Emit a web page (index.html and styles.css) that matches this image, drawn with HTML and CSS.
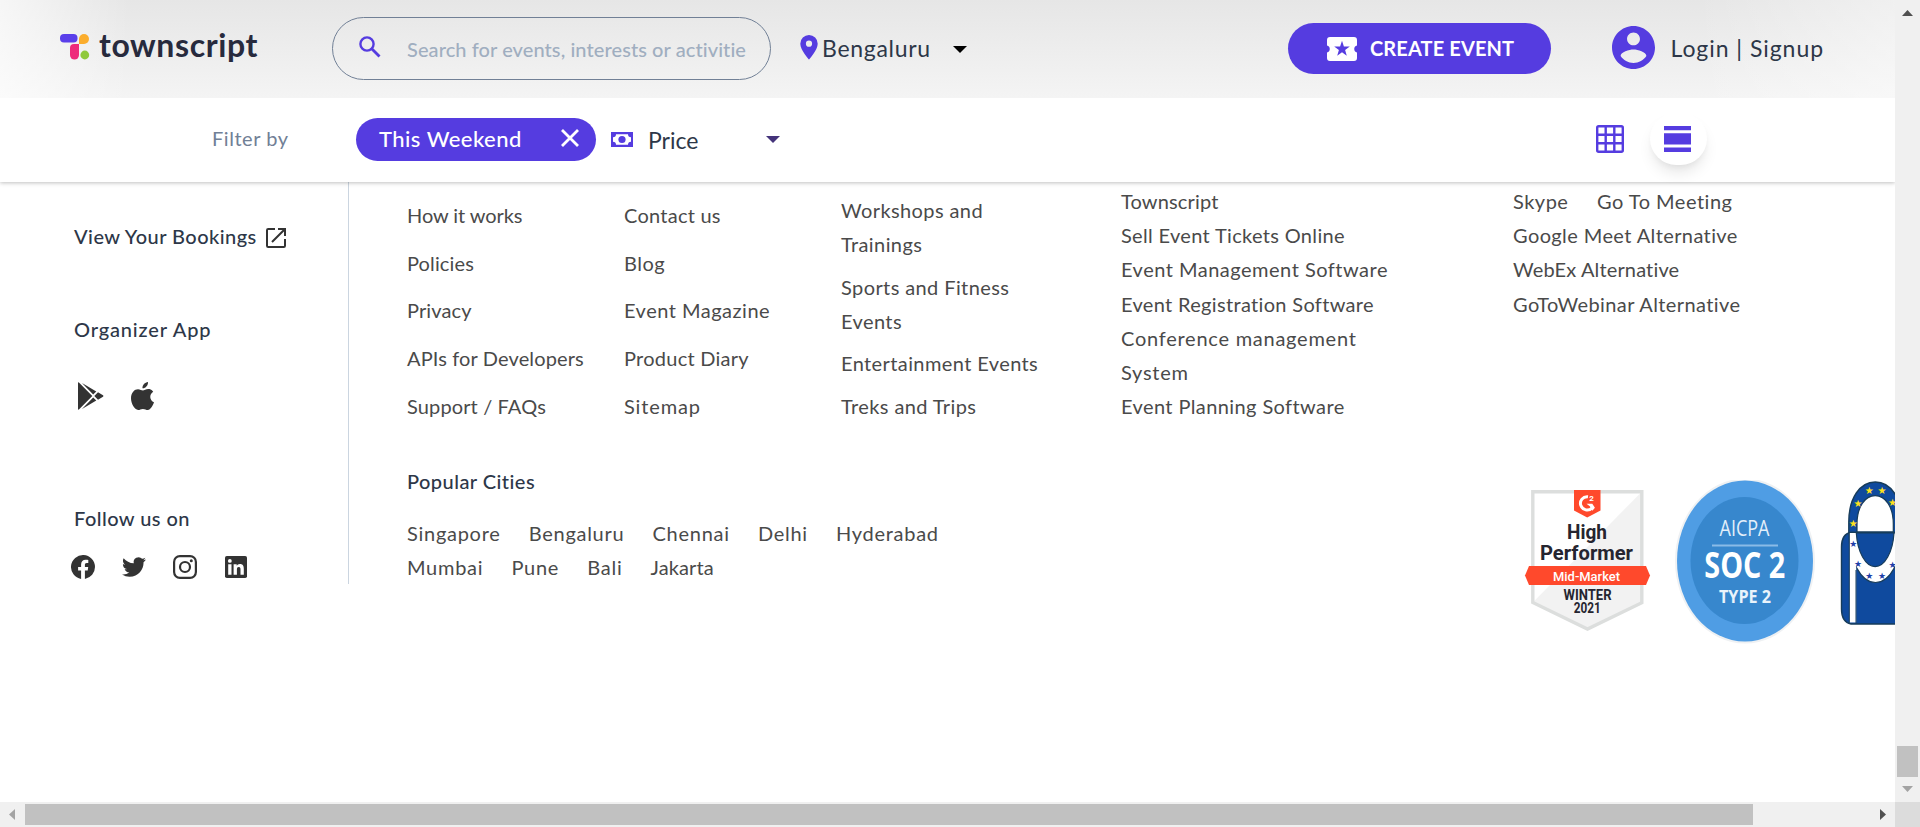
FILE: index.html
```html
<!DOCTYPE html>
<html lang="en">
<head>
<meta charset="utf-8">
<title>Townscript</title>
<link rel="stylesheet" href="styles.css">
</head>
<body>
<div class="window">
<div class="page">
  <header class="header">
    <a class="logo">
      <svg width="30" height="26" viewBox="0 0 30 26"><rect x="0" y="0" width="17.500" height="8.500" rx="4" fill="#5a3fea"/><path d="M19 10V5a5 5 0 0 1 10 0a5 5 0 0 1-5 5z" fill="#fbad2d"/><path d="M10 14a4 4 0 0 1 4-4h5v11a4.500 4.500 0 0 1-9 0z" fill="#ee2a7b"/><circle cx="24.800" cy="21" r="4.400" fill="#8fc93a"/></svg>
      <span class="logo-text">townscript</span>
    </a>
    <div class="search">
      <svg class="search-icon" width="22" height="22" viewBox="0 0 22 22" fill="none" stroke="#553ce0" stroke-width="2.400"><circle cx="8" cy="8" r="6.600"/><path d="M13 13l7.500 7.500" stroke-width="2.900"/></svg>
      <div class="placeholder">Search for events, interests or activities</div>
    </div>
    <div class="city">
      <svg width="18" height="25" viewBox="0 0 18 25"><path d="M9 0a8.700 8.700 0 0 0-8.700 8.700C.300 15.200 9 24.500 9 24.500s8.700-9.300 8.700-15.800A8.700 8.700 0 0 0 9 0zm0 11.800a3.100 3.100 0 1 1 0-6.200 3.100 3.100 0 0 1 0 6.200z" fill="#553ce0"/></svg>
      <span class="city-name">Bengaluru</span>
      <svg width="14" height="7" viewBox="0 0 14 7"><path d="M0 0h14L7 7z" fill="#000"/></svg>
    </div>
    <a class="create">
      <svg width="30" height="24" viewBox="0 0 30 24"><path d="M3 0h24a3 3 0 0 1 3 3v5.500a3.600 3.600 0 0 0 0 7V21a3 3 0 0 1-3 3H3a3 3 0 0 1-3-3v-5.500a3.600 3.600 0 0 0 0-7V3a3 3 0 0 1 3-3z" fill="#fff"/><path d="M15 3.800l1.900 5.600h5.900l-4.700 3.600 1.700 5.800-4.800-3.500-4.800 3.500 1.700-5.800-4.700-3.600h5.900z" fill="#553ce0"/></svg>
      <span>CREATE EVENT</span>
    </a>
    <a class="login">
      <svg width="43" height="43" viewBox="2 2 20 20"><path fill="#553ce0" d="M12 2C6.480 2 2 6.480 2 12s4.480 10 10 10 10-4.480 10-10S17.520 2 12 2zm0 3c1.660 0 3 1.340 3 3s-1.340 3-3 3-3-1.340-3-3 1.340-3 3-3zm0 14.200c-2.500 0-4.710-1.280-6-3.220.030-1.990 4-3.080 6-3.080 1.990 0 5.970 1.090 6 3.080-1.290 1.940-3.500 3.220-6 3.220z"/></svg>
      <span>Login | Signup</span>
    </a>
  </header>

  <div class="filters">
    <span class="filter-by">Filter by</span>
    <div class="pill"><span>This Weekend</span>
      <svg width="18" height="18" viewBox="0 0 18 18" stroke="#fff" stroke-width="2.800"><path d="M1 1l16 16M17 1L1 17"/></svg>
    </div>
    <div class="price">
      <svg width="22" height="15" viewBox="0 0 22 15"><rect width="22" height="15" fill="#553ce0"/><path d="M5 2.300h12a3 3 0 0 0 3 3v4.400a3 3 0 0 0-3 3H5a3 3 0 0 0-3-3V5.300a3 3 0 0 0 3-3z" fill="#fff"/><circle cx="11" cy="7.500" r="3.600" fill="#553ce0"/></svg>
      <span class="price-name">Price</span>
      <svg width="14" height="7" viewBox="0 0 14 7"><path d="M0 0h14L7 7z" fill="#44337a"/></svg>
    </div>
    <svg class="grid-icon" width="28" height="28" viewBox="0 0 28 28" fill="none" stroke="#553ce0" stroke-width="2.400"><rect x="1.200" y="1.200" width="25.600" height="25.600" rx="1.500"/><path d="M9.700 1v26M18.300 1v26M1 9.700h26M1 18.300h26"/></svg>
    <div class="view-btn">
      <svg width="27" height="26" viewBox="0 0 27 26" fill="#553ce0"><path d="M0 0h27v4.300H0zM0 7.200h27v11.300H0zM0 21.600h27V26H0z"/></svg>
    </div>
  </div>

  <footer class="footer">
    <aside class="side">
      <div class="side-title bookings"><span>View Your Bookings</span>
        <svg width="20" height="20" viewBox="0 0 20 20" fill="none" stroke="#333" stroke-width="2"><path d="M9 1H2.200Q1 1 1 2.200v15.600Q1 19 2.200 19h15.600q1.200 0 1.200-1.200V11M12 1h7v7M18.500 1.500L6 14"/></svg>
      </div>
      <div class="side-title organizer">Organizer App</div>
      <div class="stores">
        <svg width="26" height="28" viewBox="0 0 26 28" fill="#333"><path d="M0 1Q0 0 .900.500L14.300 14 .900 27.500Q0 28 0 27zM4 1l14.300 8.400-3.100 3.200zM4 27l14.300-8.400-3.100-3.200zM20 10.300l5 2.900q1 .800 0 1.600l-5 2.900L16.300 14z"/></svg>
        <svg width="23" height="28" viewBox="0 0 23 28" fill="#333"><path d="M17 0c.300 3.300-2.500 6.500-5.500 6.300C11.200 3.200 14 .300 17 0zM22.200 9.700c-4.300 2.700-3.700 8.700.800 10.500C22 23.200 19.500 27.700 16.800 28c-1.900 0-2.600-1.100-4.900-1.100S9 28 7.200 28C3.500 27.800 0 21.500 0 16.300 0 10.500 3.500 7.200 7 7.200c2 0 3.700 1.300 4.900 1.300s3.200-1.500 5.600-1.400c1 0 3.200.400 4.700 2.600z"/></svg>
      </div>
      <div class="side-title follow">Follow us on</div>
      <div class="social">
        <svg width="24" height="24" viewBox="0 0 24 24" fill="#333"><path d="M24 12a12 12 0 1 0-13.900 11.900v-8.400H7.100V12h3V9.400c0-3 1.800-4.700 4.500-4.700 1.300 0 2.700.200 2.700.200v3h-1.500c-1.500 0-1.900.900-1.900 1.900V12h3.300l-.500 3.500h-2.800v8.400A12 12 0 0 0 24 12z"/></svg>
        <svg width="24" height="24" viewBox="0 0 24 24" fill="#333"><path d="M23.950 4.570a10 10 0 0 1-2.820.775 4.960 4.960 0 0 0 2.160-2.720c-.950.555-2 .960-3.130 1.180a4.920 4.920 0 0 0-8.380 4.480C7.690 8.100 4.070 6.130 1.640 3.160a4.820 4.820 0 0 0-.670 2.480c0 1.710.870 3.210 2.190 4.100a4.900 4.900 0 0 1-2.230-.620v.060a4.920 4.920 0 0 0 3.950 4.830 5 5 0 0 1-2.210.080 4.940 4.940 0 0 0 4.600 3.420A9.870 9.870 0 0 1 0 19.540a14 14 0 0 0 7.550 2.210c9.050 0 14-7.500 14-13.980 0-.210 0-.420-.020-.630a9.940 9.940 0 0 0 2.460-2.550z"/></svg>
        <svg width="24" height="24" viewBox="0 0 24 24" fill="none" stroke="#333" stroke-width="2.200"><rect x="1.100" y="1.100" width="21.800" height="21.800" rx="5.800"/><circle cx="12" cy="12" r="5"/><circle cx="18.300" cy="5.700" r="1.500" fill="#333" stroke="none"/></svg>
        <svg width="22" height="22" viewBox="0 0 22 22"><rect width="22" height="22" rx="1.800" fill="#333"/><path d="M3.200 8.300h3.300v10.500H3.200zM8.600 8.300h3.100v1.500c.500-.9 1.600-1.800 3.200-1.800 3.300 0 3.900 2.200 3.900 5v5.800h-3.300v-5.100c0-1.200 0-2.800-1.700-2.800s-1.900 1.300-1.900 2.700v5.200H8.600z" fill="#fff"/><circle cx="4.850" cy="4.900" r="1.900" fill="#fff"/></svg>
      </div>
    </aside>

    <div class="main">
      <div class="columns">
        <ul class="col col-a"><li>How it works</li><li>Policies</li><li>Privacy</li><li>APIs for Developers</li><li>Support / FAQs</li></ul>
        <ul class="col col-b"><li>Contact us</li><li>Blog</li><li>Event Magazine</li><li>Product Diary</li><li>Sitemap</li></ul>
        <ul class="col col-c"><li>Workshops and<br>Trainings</li><li>Sports and Fitness<br>Events</li><li>Entertainment Events</li><li>Treks and Trips</li></ul>
        <ul class="col col-d"><li>Townscript</li><li>Sell Event Tickets Online</li><li>Event Management Software</li><li>Event Registration Software</li><li>Conference management<br>System</li><li>Event Planning Software</li></ul>
        <ul class="col col-e"><li class="pair"><span>Skype</span><span>Go To Meeting</span></li><li>Google Meet Alternative</li><li>WebEx Alternative</li><li>GoToWebinar Alternative</li></ul>
      </div>
      <div class="bottom">
        <div class="cities">
          <div class="side-title">Popular Cities</div>
          <div class="city-row first"><span>Singapore</span><span>Bengaluru</span><span>Chennai</span><span>Delhi</span><span>Hyderabad</span></div>
          <div class="city-row"><span>Mumbai</span><span>Pune</span><span>Bali</span><span class="tight">Jakarta</span></div>
        </div>
        <svg class="badges" width="375" height="170" viewBox="0 0 375 170">
          <g>
            <path d="M12.800 11.700h109v111L67.500 150 12.800 122.500z" fill="#fff"/>
            <path d="M121.800 11.700v110.800L67.500 150 12.800 122.500z" fill="#f2f2f2"/>
            <path d="M12.800 11.700h109v111L67.500 149 12.800 122.500z" fill="none" stroke="#dcdedd" stroke-width="3.400"/>
            <path d="M54 10h26.500v20.500L67.200 37.500 54 30.500z" fill="#ff492c"/>
            <path d="M68 16.700A6.700 6.700 0 1 0 72 28" fill="none" stroke="#fff" stroke-width="3"/>
            <path d="M66.500 23.800h5.800l2.600 4-2.500 3-2.600-4.500z" fill="#fff"/>
            <text x="71.500" y="20.800" class="g2-tiny">2</text>
            <text x="67" y="59" class="g2-title" textLength="40" lengthAdjust="spacingAndGlyphs">High</text>
            <text x="66.500" y="79.500" class="g2-title" textLength="93" lengthAdjust="spacingAndGlyphs">Performer</text>
            <path d="M9 86h117l4 9.500-4 9.500H9l-4-9.500z" fill="#ff492c"/>
            <text x="66.500" y="100.500" class="g2-market" textLength="67" lengthAdjust="spacingAndGlyphs">Mid-Market</text>
            <text x="67.500" y="119.500" class="g2-date" textLength="48" lengthAdjust="spacingAndGlyphs">WINTER</text>
            <text x="67.300" y="132.500" class="g2-date" textLength="27" lengthAdjust="spacingAndGlyphs">2021</text>
          </g>
          <g>
            <ellipse cx="225" cy="81" rx="70" ry="82.500" fill="#eff1f3"/>
            <ellipse cx="225" cy="81" rx="68" ry="80.500" fill="#4f9de4"/>
            <ellipse cx="224.500" cy="80.500" rx="54" ry="63.500" fill="#3787cd"/>
            <text x="224.500" y="56" class="soc-aicpa" textLength="50" lengthAdjust="spacingAndGlyphs">AICPA</text>
            <path d="M192 65.500h66" stroke="#8abbe7" stroke-width="2"/>
            <text x="224.800" y="98" class="soc-title" textLength="81" lengthAdjust="spacingAndGlyphs">SOC 2</text>
            <text x="225" y="123" class="soc-type" textLength="52" lengthAdjust="spacingAndGlyphs">TYPE 2</text>
          </g>
          <g>
            <path d="M328.800 53V42C328.800 18 340 2 355.300 2s26.600 16 26.600 40v11z" fill="#0f4a9e" stroke="#173c5a" stroke-width="1.400"/>
            <path d="M337 52V44c0-17 8-28.300 18.200-28.300S373.300 27 373.300 44v8z" fill="#fff" stroke="#173c5a" stroke-width="1.200"/>
            <path d="M331 52.300h50V144h-50q-9.500-2-9.500-15V67q0-13 9.500-14.700z" fill="#0f4a9e" stroke="#173c5a" stroke-width="1.400"/>
            <path d="M329 53A26.500 49.500 0 0 0 382 53z" fill="#fff" stroke="#173c5a" stroke-width="1.200"/>
            <path d="M329.300 53h6.900v89.500h-6.900z" fill="#fff"/>
            <path d="M336.300 53A19 38.500 0 0 0 374 53z" fill="#0f4a9e" stroke="#173c5a" stroke-width="1.200"/>
            <path d="M329.300 53v90M336 90v53" stroke="#173c5a" stroke-width="1"/>
            <g class="stars-gold"><text x="349.300" y="14.300">★</text><text x="362" y="14.300">★</text><text x="338" y="26.800">★</text><text x="372.500" y="26.300">★</text><text x="333.300" y="47">★</text></g>
            <g class="stars-blue"><text x="333.300" y="66.500">★</text><text x="338" y="87">★</text><text x="349.300" y="99">★</text><text x="362" y="99">★</text><text x="372.500" y="87.500">★</text></g>
          </g>
        </svg>
      </div>
    </div>
  </footer>
</div>
<div class="vbar">
  <svg width="25" height="25" viewBox="0 0 25 25"><path d="M7 16h11l-5.500-6z" fill="#505050"/></svg>
  <div class="vthumb"></div>
  <svg width="25" height="25" viewBox="0 0 25 25"><path d="M7 9h11l-5.500 6z" fill="#a3a3a3"/></svg>
</div>
<div class="hbar">
  <svg width="25" height="25" viewBox="0 0 25 25"><path d="M15 7v11l-6-5.500z" fill="#a3a3a3"/></svg>
  <div class="hthumb"></div>
  <svg class="end" width="25" height="25" viewBox="0 0 25 25"><path d="M10 7v11l6-5.500z" fill="#505050"/></svg>
</div>
<div class="corner"></div>
</div>
</body>
</html>
```
FILE: styles.css
```css
* { box-sizing: border-box; }
body { margin: 0; font-family: Lato, "Open Sans", sans-serif; font-size: 20px; color: #4a4a4a; overflow: hidden; font-variant-ligatures: none; }
svg { display: block; flex: none; }
ul { list-style: none; margin: 0; padding: 0; }
.window { display: grid; grid-template-columns: 1895px 25px; grid-template-rows: 802px 25px; width: 1920px; height: 827px; background: #fff; }
.page { overflow: hidden; white-space: nowrap; }

.header {
  position: relative; z-index: 2; display: flex; height: 98px; padding-left: 60px;
  background:
    linear-gradient(to right, rgba(255,255,255,.65), rgba(255,255,255,0) 130px),
    linear-gradient(to left, rgba(255,255,255,.4), rgba(255,255,255,0) 200px),
    linear-gradient(to bottom, #e6e6e6, #f4f4f4);
}
.logo { display: flex; width: 272px; padding-top: 34px; }
.logo-text { margin: -8px 0 0 9px; font-size: 32px; line-height: 38px; font-weight: 700; letter-spacing: .6px; color: #272a3d; }
.search { display: flex; width: 439px; height: 63px; margin-top: 17px; border: 1px solid #718096; border-radius: 32px; padding: 0 24px 0 26px; }
.search-icon { margin-top: 18px; }
.placeholder { margin: 19px 0 0 26px; width: 339px; overflow: hidden; line-height: 24px; letter-spacing: .08px; color: #a0aec0; font-weight: 500; }
.city { display: flex; width: 517px; padding: 35px 0 0 29px; color: #2d3748; }
.city-name { width: 131px; margin: -1px 0 0 4px; font-size: 23px; line-height: 28px; letter-spacing: .7px; }
.city svg:last-child { margin-top: 11px; }
.create { display: flex; align-items: center; width: 263px; height: 51px; margin-top: 23px; padding-left: 39px; gap: 13px; border-radius: 26px; background: #553ce0; color: #fff; font-weight: 700; letter-spacing: .12px; }
.create span { padding-bottom: 2px; }
.login { display: flex; margin: 26px 0 0 61px; gap: 15.5px; font-size: 23px; letter-spacing: .95px; color: #2d3748; }
.login span { line-height: 28px; margin-top: 8px; }

.filters { position: relative; display: flex; height: 84px; padding-left: 212px; background: #fff; box-shadow: 0 1px 4px rgba(0,0,0,.25); }
.filter-by { width: 144px; margin-top: 28px; line-height: 24px; letter-spacing: .55px; color: #718096; }
.pill { display: flex; width: 240px; height: 43px; margin-top: 20px; padding: 11px 17px 0 23px; justify-content: space-between; border-radius: 22px; background: #553ce0; color: #fff; font-size: 22px; line-height: 20px; letter-spacing: .45px; font-weight: 500; }
.price { display: flex; width: 1000px; padding: 34px 0 0 15px; color: #2d3748; }
.price-name { width: 118px; margin: -6px 0 0 15px; font-size: 23px; line-height: 28px; }
.price svg:last-child { margin-top: 4px; }
.grid-icon { margin: 27px 0 0; }
.view-btn { display: flex; justify-content: center; align-items: center; width: 57px; height: 53px; margin: 14px 0 0 26px; padding-right: 2px; border-radius: 27px; background: #fff; box-shadow: 0 10px 15px -3px rgba(0,0,0,.1), 0 4px 6px -2px rgba(0,0,0,.05); }

.footer { display: flex; }
.side { width: 349px; height: 402px; padding-left: 74px; border-right: 1px solid #cbd5e0; }
.side-title { line-height: 24px; font-weight: 500; letter-spacing: .45px; color: #2d3748; }
.bookings { display: flex; gap: 9px; padding-top: 42px; }
.bookings svg { margin-top: 4px; }
.organizer { margin-top: 69px; letter-spacing: .85px; }
.stores { display: flex; gap: 27px; padding: 41px 0 0 4px; }
.follow { margin-top: 96px; }
.social { display: flex; align-items: center; gap: 27.2px; margin: 25px 0 0 -3px; }

.main { width: 1546px; padding-left: 58px; }
.columns { display: flex; height: 277px; line-height: 34.2px; }
.col { flex: none; letter-spacing: .4px; }
.col-a { width: 217px; padding-top: 10px; line-height: 47.7px; letter-spacing: .13px; }
.col-a li:first-child { letter-spacing: -.08px; }
.col-b { width: 217px; padding-top: 10px; line-height: 47.7px; letter-spacing: .25px; }
.col-b li:nth-child(2) { letter-spacing: .5px; }
.col-b li:nth-child(3) { letter-spacing: .5px; }
.col-b li:last-child { letter-spacing: .85px; }
.col-c { width: 280px; padding-top: 11px; }
.col-c li { margin-bottom: 8.200px; }
.col-d { width: 392px; padding-top: 2px; }
.col-d li:nth-child(1) { letter-spacing: .15px; }
.col-d li:nth-child(2), .col-d li:nth-child(4) { letter-spacing: .33px; }
.col-d li:nth-child(3) { letter-spacing: .5px; }
.col-d li:nth-child(5) { letter-spacing: .75px; }
.col-e { padding-top: 2px; }
.col-e li:nth-child(3) { letter-spacing: .15px; }
.pair { display: flex; gap: 28.5px; letter-spacing: .5px; }
.bottom { display: flex; }
.cities { width: 1113px; padding-top: 10px; }
.city-row { display: flex; gap: 28.2px; line-height: 34px; letter-spacing: .72px; }
.city-row .tight { letter-spacing: .1px; }
.city-row.first { margin-top: 23px; }
.badges { margin-top: 21px; }
.badges text { text-anchor: middle; }
.g2-title { font: 700 20px Roboto, sans-serif; fill: #252530; }
.g2-market { font: 500 13px Roboto, sans-serif; fill: #fff; }
.g2-date { font: 700 14px Roboto, sans-serif; fill: #252530; }
.g2-tiny { font: 700 8px Roboto, sans-serif; fill: #fff; }
.soc-aicpa { font: 400 22px "Open Sans", sans-serif; fill: #e3effa; }
.soc-title { font: 700 35px "Open Sans", sans-serif; fill: #fff; }
.soc-type { font: 700 18px "Open Sans", sans-serif; fill: #e9f3fb; }
.stars-gold { font: 10px "DejaVu Sans", sans-serif; fill: #ffe11b; }
.stars-blue { font: 9px "DejaVu Sans", sans-serif; fill: #1f3fa8; }

.vbar { background: #f0f0f0; display: flex; flex-direction: column; }
.vthumb { width: 21px; height: 31px; margin: 721px 0 0 2px; background: #c1c1c1; }
.hbar { background: #f0f0f0; display: flex; }
.hthumb { width: 1728px; height: 21px; margin-top: 2px; background: #c1c1c1; }
.end { margin-left: auto; }
.corner { background: #dcdcdc; }
```
